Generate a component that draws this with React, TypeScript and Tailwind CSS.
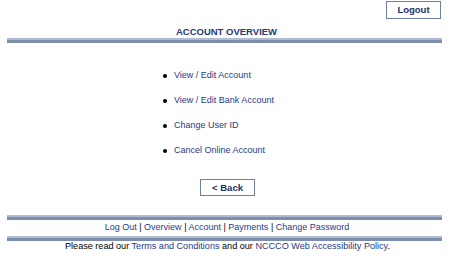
const font = { fontFamily: '"Liberation Sans", Arial, sans-serif' };

function Bar() {
  return (
    <div className="mx-[7px] h-[5px] border-t-2 border-[#aebbd0] bg-[#7d8dab]" />
  );
}

const items = [
  "View / Edit Account",
  "View / Edit Bank Account",
  "Change User ID",
  "Cancel Online Account",
];

const footerLinks = ["Log Out", "Overview", "Account", "Payments", "Change Password"];

export default function App() {
  return (
    <div className="w-[449px] h-[256px] bg-white text-[9px] text-black" style={font}>
      <div className="flex justify-end pt-[1px] pr-[8px]">
        <button className="w-[55px] h-[18px] border border-[#6b7fa8] bg-white text-[9.5px] font-bold text-[#1c2f6b] leading-none">
          Logout
        </button>
      </div>
      <div className="mt-[7px] pl-[4px] text-center text-[9.5px] font-bold text-[#1c3a7c] leading-[12px]">
        ACCOUNT OVERVIEW
      </div>
      <Bar />
      <ul className="mt-[26px] ml-[163px] flex flex-col gap-[12px]">
        {items.map((t) => (
          <li key={t} className="flex items-center h-[13px] leading-[13px]">
            <span className="w-[4px] h-[4px] rounded-full bg-black mr-[7px]" />
            <a className="text-[#1f3a87]">{t}</a>
          </li>
        ))}
      </ul>
      <div className="mt-[22px] pl-[6px] flex justify-center">
        <button className="w-[55px] h-[17px] border border-[#6b7fa8] bg-white text-[9.5px] font-bold text-[#1c2f6b] leading-none">
          &lt; Back
        </button>
      </div>
      <div className="mt-[19px]">
        <Bar />
      </div>
      <div className="mt-[1px] pl-[5px] text-center leading-[12px]">
        {footerLinks.map((l, i) => (
          <span key={l}>
            {i > 0 && <span className="text-black"> | </span>}
            <a className="text-[#1f3a87]">{l}</a>
          </span>
        ))}
      </div>
      <div className="mt-[3px]">
        <Bar />
      </div>
      <div className="pl-[6px] text-center text-[9.1px] leading-[11px]">
        Please read our <a className="text-[#1f3a87]">Terms and Conditions</a> and our{" "}
        <a className="text-[#1f3a87]">NCCCO Web Accessibility Policy</a>.
      </div>
    </div>
  );
}
